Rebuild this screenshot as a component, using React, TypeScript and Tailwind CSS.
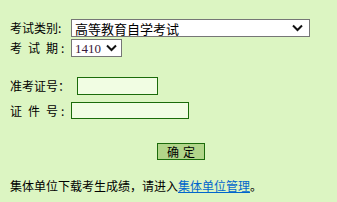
export default function App() {
  return (
    <div
      className="h-[202px] w-[337px] overflow-hidden bg-[#dcf5c2] text-[12px] leading-none text-black"
      style={{ fontFamily: '"Noto Sans CJK SC", "Noto Sans", sans-serif' }}
    >
      <div className="pl-[10px] pt-[19px]">
        {/* 考试类别 */}
        <div className="flex h-[18px] items-center">
          <span className="w-[61px] whitespace-pre">考试类别:</span>
          <div className="flex h-[18px] w-[239px] items-center justify-between border border-[#767676] bg-white pl-[3px] pr-[6px] text-[13px]">
            <span>高等教育自学考试</span>
            <Chevron />
          </div>
        </div>

        {/* 考试期 */}
        <div className="mt-[2px] flex h-[18px] items-center">
          <Spaced chars={["考", "试", "期"]} />
          <div
            className="flex h-[18px] w-[51px] items-center justify-between border border-[#767676] bg-white pl-[3px] pr-[4px] text-[13px] text-[#3a1a3a]"
            style={{ fontFamily: '"Liberation Serif", serif' }}
          >
            <span>1410</span>
            <Chevron />
          </div>
        </div>

        {/* 准考证号 */}
        <div className="mt-[20px] flex h-[18px] items-center">
          <span className="w-[67px] whitespace-pre">准考证号：</span>
          <div className="h-[18px] w-[81px] border border-[#1b6b0a] bg-[#f1fde3]" />
        </div>

        {/* 证件号 */}
        <div className="mt-[7px] flex h-[17px] items-center">
          <Spaced chars={["证", "件", "号"]} />
          <div className="h-[17px] w-[118px] border border-[#1b6b0a] bg-[#f1fde3]" />
        </div>

        {/* 确定 */}
        <div className="mt-[24px] pl-[147px]">
          <button className="flex h-[17px] w-[48px] items-center justify-center border border-[#1b6b0a] bg-[#b2d68a] text-[12px] tracking-[4px]">
            <span className="pl-[4px]">确定</span>
          </button>
        </div>

        {/* 集体单位 */}
        <div className="mt-[20px] whitespace-nowrap">
          集体单位下载考生成绩，请进入
          <a className="text-[#0066cc] underline">集体单位管理</a>。
        </div>
      </div>
    </div>
  );
}

function Spaced({ chars }: { chars: string[] }) {
  return (
    <span className="flex w-[61px] items-center gap-[6px]">
      {chars.map((c) => (
        <span key={c} className="w-[12px]">
          {c}
        </span>
      ))}
      <span className="-ml-[3px]">:</span>
    </span>
  );
}

function Chevron() {
  return (
    <svg width="11" height="8" viewBox="0 0 11 8" className="shrink-0">
      <path d="M1 1.5 L5.5 6 L10 1.5" fill="none" stroke="#111" strokeWidth="2" />
    </svg>
  );
}
